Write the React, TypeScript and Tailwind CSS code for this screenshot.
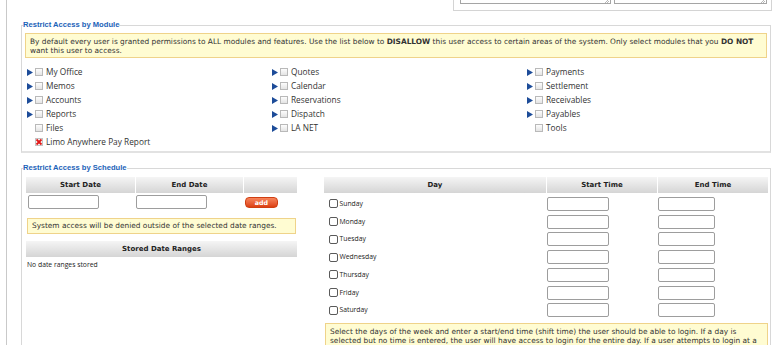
import React from "react";

const Arrow = () => (
  <svg width="6" height="7" viewBox="0 0 6 7" className="block">
    <polygon points="0,0 6,3.5 0,7" fill="#1d4c99" />
  </svg>
);

const Box = ({ checked }: { checked?: boolean }) =>
  checked ? (
    <svg width="8" height="8" viewBox="0 0 8 8" className="block ml-[2px]">
      <rect x="0.5" y="0.5" width="7" height="7" fill="#f6f6f6" stroke="#c4c4c4" />
      <path d="M1.5 1.5 L6.5 6.5 M6.5 1.5 L1.5 6.5" stroke="#e01818" strokeWidth="1.8" />
    </svg>
  ) : (
    <span className="block ml-[2px] w-[8px] h-[8px] border border-[#b9b9b9] bg-linear-to-b from-[#fdfdfd] to-[#e4e4e4]" />
  );

type Item = { label: string; arrow: boolean; checked?: boolean };

const ModuleItem = ({ item }: { item: Item }) => (
  <div className="flex items-center h-[14px]">
    <span className="w-[6px] flex">{item.arrow && <Arrow />}</span>
    <Box checked={item.checked} />
    <span className="ml-[3px] font-['Open_Sans'] text-[8.3px] leading-[14px] text-[#333] whitespace-nowrap">
      {item.label}
    </span>
  </div>
);

const col1: Item[] = [
  { label: "My Office", arrow: true },
  { label: "Memos", arrow: true },
  { label: "Accounts", arrow: true },
  { label: "Reports", arrow: true },
  { label: "Files", arrow: false },
  { label: "Limo Anywhere Pay Report", arrow: false, checked: true },
];
const col2: Item[] = [
  { label: "Quotes", arrow: true },
  { label: "Calendar", arrow: true },
  { label: "Reservations", arrow: true },
  { label: "Dispatch", arrow: true },
  { label: "LA NET", arrow: true },
];
const col3: Item[] = [
  { label: "Payments", arrow: true },
  { label: "Settlement", arrow: true },
  { label: "Receivables", arrow: true },
  { label: "Payables", arrow: true },
  { label: "Tools", arrow: false },
];

const Header = ({ children }: { children?: React.ReactNode }) => (
  <div className="h-[16px] bg-linear-to-b from-[#f5f5f5] to-[#d5d5d5] text-center font-['DejaVu_Sans'] font-bold text-[7px] leading-[17px] text-[#222] whitespace-nowrap">
    {children}
  </div>
);

const Input = ({ w }: { w: string }) => (
  <div className={`h-[14px] ${w} border border-[#9d9d9d] rounded-[2px] bg-white`} />
);

const Grip = () => (
  <svg width="5" height="4" viewBox="0 0 5 4" className="absolute right-[1px] bottom-0">
    <path d="M1 4 L5 0 M3 4 L5 2" stroke="#999" strokeWidth="0.7" />
  </svg>
);

const days = ["Sunday", "Monday", "Tuesday", "Wednesday", "Thursday", "Friday", "Saturday"];

export default function App() {
  return (
    <div className="w-[780px] h-[345px] overflow-hidden bg-white pl-[6px]">
      <div className="h-full border-l border-[#c9c9c9] pl-[14px] pr-[8px]">
        {/* top box */}
        <div className="flex justify-end">
          <div className="w-[319px] h-[11px] border-x border-b border-[#d4d4d4] flex pl-[6px] gap-[3px]">
            <div className="relative w-[151px] h-[4px] border-x border-b border-[#a5a5a5]">
              <Grip />
            </div>
            <div className="relative w-[153px] h-[4px] border-x border-b border-[#a5a5a5]">
              <Grip />
            </div>
          </div>
        </div>

        {/* Module fieldset */}
        <fieldset className="mt-[9px] mr-[1px] min-w-0 border border-b-2 border-[#d8d8d8] border-b-[#e2e2e2]">
          <legend className="ml-[1px] font-['Liberation_Sans'] font-bold text-[7.6px] leading-[10px] text-[#1b62b8]">
            Restrict Access by Module
          </legend>
          <div className="px-[3px] pt-[3px]">
            <div className="h-[25px] border border-[#efd38a] bg-[#fffcd2] pl-[4px] pt-[3px] font-['DejaVu_Sans'] text-[7.4px] leading-[9px] text-[#333] whitespace-nowrap">
              By default every user is granted permissions to ALL modules and features. Use the list below to <b>DISALLOW</b> this user access to certain areas of the system. Only select modules that you <b>DO NOT</b>
              <br />
              want this user to access.
            </div>
          </div>
          <div className="grid grid-cols-[245px_255px_1fr] pl-[5px] mt-[7px] pb-[2px]">
            <div className="flex flex-col">
              {col1.map((i) => (
                <ModuleItem key={i.label} item={i} />
              ))}
            </div>
            <div className="flex flex-col">
              {col2.map((i) => (
                <ModuleItem key={i.label} item={i} />
              ))}
            </div>
            <div className="flex flex-col">
              {col3.map((i) => (
                <ModuleItem key={i.label} item={i} />
              ))}
            </div>
          </div>
        </fieldset>

        {/* Schedule fieldset */}
        <fieldset className="mt-[10px] mr-[1px] min-w-0 border border-[#d8d8d8] h-[200px]">
          <legend className="ml-[1px] font-['Liberation_Sans'] font-bold text-[7.6px] leading-[10px] text-[#1b62b8]">
            Restrict Access by Schedule
          </legend>
          <div className="flex pl-[4px] mt-[4px]">
            {/* left */}
            <div className="w-[271px] flex flex-col">
              <div className="grid grid-cols-[109px_107px_53px] gap-x-[1px]">
                <Header>Start Date</Header>
                <Header>End Date</Header>
                <Header />
              </div>
              <div className="grid grid-cols-[109px_107px_53px] gap-x-[1px] mt-[2px] items-center">
                <div className="pl-[2px]">
                  <Input w="w-[71px]" />
                </div>
                <div>
                  <Input w="w-[71px]" />
                </div>
                <div className="pl-[1px]">
                  <div className="w-[33px] h-[11px] rounded-[4px] border border-[#cf3f12] bg-linear-to-b from-[#f7845a] to-[#dc3f0e] text-center font-['DejaVu_Sans'] font-bold text-[6.3px] leading-[9px] text-white">
                    add
                  </div>
                </div>
              </div>
              <div className="ml-[1px] mt-[9px] w-[269px] h-[16px] border border-[#efd38a] bg-[#fffcd2] pl-[4px] font-['DejaVu_Sans'] text-[7.4px] leading-[14px] text-[#333] whitespace-nowrap">
                System access will be denied outside of the selected date ranges.
              </div>
              <div className="mt-[7px]">
                <Header>Stored Date Ranges</Header>
              </div>
              <div className="mt-[3px] pl-[1px] font-['Open_Sans'] text-[6.8px] leading-[10px] text-[#222]">
                No date ranges stored
              </div>
            </div>

            {/* right */}
            <div className="ml-[27px] w-[444px] flex flex-col">
              <div className="grid grid-cols-[222px_110px_110px] gap-x-[1px]">
                <Header>Day</Header>
                <Header>Start Time</Header>
                <Header>End Time</Header>
              </div>
              <div className="mt-[2px] flex flex-col">
                {days.map((d) => (
                  <div key={d} className="grid grid-cols-[222px_110px_110px] gap-x-[1px] h-[17.75px] items-center">
                    <div className="flex items-center pl-[5px]">
                      <span className="block w-[9px] h-[9px] border border-[#5a5a5a] rounded-[2px] bg-white" />
                      <span className="ml-[1.5px] font-['Open_Sans'] text-[6.8px] leading-[10px] text-[#222]">{d}</span>
                    </div>
                    <div>
                      <Input w="w-[62px]" />
                    </div>
                    <div>
                      <Input w="w-[57px]" />
                    </div>
                  </div>
                ))}
              </div>
              <div className="ml-[1px] mt-[4px] w-[443px] h-[30px] border border-[#efd38a] bg-[#fffcd2] pl-[4px] pt-[3px] font-['DejaVu_Sans'] text-[7.4px] leading-[9px] text-[#333] whitespace-nowrap">
                Select the days of the week and enter a start/end time (shift time) the user should be able to login. If a day is
                <br />
                selected but no time is entered, the user will have access to login for the entire day. If a user attempts to login at a
              </div>
            </div>
          </div>
        </fieldset>
      </div>
    </div>
  );
}
